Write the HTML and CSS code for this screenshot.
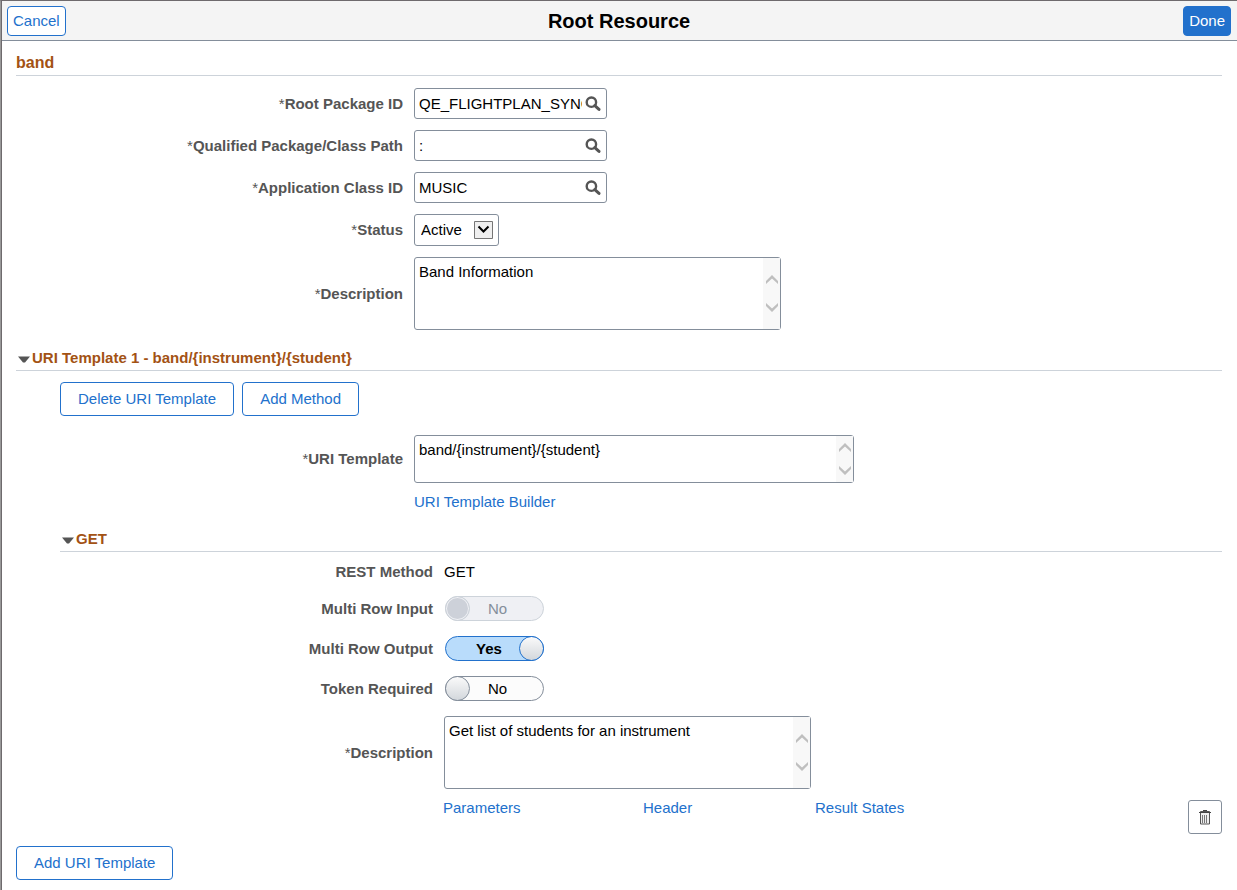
FILE: index.html
```html
<!DOCTYPE html>
<html lang="en">
<head>
<meta charset="utf-8">
<title>Root Resource</title>
<link rel="stylesheet" href="styles.css">
</head>
<body>
<svg class="sprite" aria-hidden="true">
  <symbol id="search" viewBox="0 0 16 16"><circle cx="6.4" cy="6.2" r="4.7" fill="none" stroke="#555" stroke-width="2.4"/><path d="M9.8 9.6 14 13.4" stroke="#555" stroke-width="3" stroke-linecap="round"/></symbol>
  <symbol id="up" viewBox="0 0 12 9"><path d="M0 6 6 0l6 6v3L6 3.6 0 9z" fill="#bfbfbf"/></symbol>
  <symbol id="down" viewBox="0 0 12 9"><path d="M0 3 6 9l6-6V0L6 5.4 0 0z" fill="#bfbfbf"/></symbol>
</svg>
<form class="dialog">
  <header class="topbar">
    <button type="button" class="btn small">Cancel</button>
    <h1>Root Resource</h1>
    <button type="button" class="btn small primary">Done</button>
  </header>
  <main class="content">
    <section>
      <h2 class="heading band">band</h2>
      <div class="fields first">
        <label for="pkg"><span>*</span>Root Package ID</label>
        <div class="lookup"><input id="pkg" type="text" value="QE_FLIGHTPLAN_SYNC"><button type="button" aria-label="Look up Root Package ID"><svg><use href="#search"/></svg></button></div>
        <label for="path"><span>*</span>Qualified Package/Class Path</label>
        <div class="lookup"><input id="path" type="text" value=":"><button type="button" aria-label="Look up Class Path"><svg><use href="#search"/></svg></button></div>
        <label for="cls"><span>*</span>Application Class ID</label>
        <div class="lookup"><input id="cls" type="text" value="MUSIC"><button type="button" aria-label="Look up Application Class ID"><svg><use href="#search"/></svg></button></div>
        <label for="status"><span>*</span>Status</label>
        <div class="choice"><select id="status"><option>Active</option></select><svg viewBox="0 0 19 18"><path d="M.5.5h18v17H.5z" fill="#efefef" stroke="#757575"/><path d="M4.5 5.5l5 5 5-5" fill="none" stroke="#000" stroke-width="2"/></svg></div>
        <label for="desc"><span>*</span>Description</label>
        <div class="area"><textarea id="desc">Band Information</textarea><div class="scroll"><svg><use href="#up"/></svg><svg><use href="#down"/></svg></div></div>
      </div>
    </section>
    <section>
      <h2 class="heading"><svg class="caret" viewBox="0 0 12 7"><path d="M0 .5h12L7 6.500H5z" fill="#555"/></svg>URI Template 1 - band/{instrument}/{student}</h2>
      <div class="actions">
        <button type="button" class="btn">Delete URI Template</button>
        <button type="button" class="btn">Add Method</button>
      </div>
      <div class="fields uri">
        <label for="uri"><span>*</span>URI Template</label>
        <div class="area wide"><textarea id="uri">band/{instrument}/{student}</textarea><div class="scroll"><svg><use href="#up"/></svg><svg><use href="#down"/></svg></div></div>
        <a class="builder" href="#">URI Template Builder</a>
      </div>
      <section class="method">
        <h3 class="heading"><svg class="caret" viewBox="0 0 12 7"><path d="M0 .5h12L7 6.500H5z" fill="#555"/></svg>GET</h3>
        <div class="fields nested">
          <span class="name">REST Method</span><span class="value">GET</span>
          <label for="mri">Multi Row Input</label>
          <label class="switch disabled"><input id="mri" type="checkbox" disabled><span>No</span></label>
          <label for="mro">Multi Row Output</label>
          <label class="switch on"><input id="mro" type="checkbox" checked><span>Yes</span></label>
          <label for="tok">Token Required</label>
          <label class="switch"><input id="tok" type="checkbox"><span>No</span></label>
          <label for="mdesc"><span>*</span>Description</label>
          <div class="area"><textarea id="mdesc">Get list of students for an instrument</textarea><div class="scroll"><svg><use href="#up"/></svg><svg><use href="#down"/></svg></div></div>
        </div>
        <div class="links">
          <a href="#">Parameters</a><a href="#">Header</a><a href="#">Result States</a>
          <button type="button" class="trash" aria-label="Delete method"><svg viewBox="0 0 12 16"><path d="M4 1h4v1H4z" fill="#444"/><path d="M1.500 3.500V2.500h9v1" fill="#ddd" stroke="#555"/><path d="M0 3.500h12" stroke="#444"/><path d="M1.500 4v11h9V4" fill="#eee" stroke="#555"/><path d="M3.500 6v8M5.500 6v8M7.500 6v8" stroke="#777"/></svg></button>
        </div>
      </section>
    </section>
    <button type="button" class="btn">Add URI Template</button>
  </main>
</form>
</body>
</html>
```
FILE: styles.css
```css
* { box-sizing: border-box; }
body {
  margin: 0;
  background: #fff;
  color: #000;
  font: 15px/20px "Liberation Sans", Arial, sans-serif;
}
button, input, select, textarea { font: inherit; color: inherit; }
.sprite { display: none; }
.dialog {
  min-height: 100vh;
  border-left: 1px solid #999;
  border-top: 1px solid #6e6a6d;
  box-shadow: inset 1px 0 #6e6a6d;
  padding-left: 1px;
}
.topbar {
  display: grid;
  grid-template-columns: 1fr auto 1fr;
  align-items: center;
  height: 40px;
  padding: 0 6px 0 5px;
  background: #f4f4f4;
  border-bottom: 1px solid #848e9b;
}
.topbar h1 { margin: 0; font-size: 20px; line-height: 24px; }
.btn {
  height: 34px;
  padding: 0 17px;
  border: 1px solid #2271cc;
  border-radius: 4px;
  background: #fff;
  color: #2271cc;
}
.btn.small { height: 30px; padding: 0 5px; justify-self: start; }
.btn.primary { background: #2271cc; color: #fff; justify-self: end; }
.content { padding: 12px 15px 10px 14px; }
.heading {
  display: flex;
  align-items: center;
  margin: 0;
  padding-bottom: 2px;
  border-bottom: 1px solid #cdd3da;
  color: #a35214;
  font-size: 15px;
  line-height: 20px;
}
.heading.band { font-size: 16px; }
.caret { width: 12px; height: 7px; margin: 3px 2px 0; }
.fields {
  display: grid;
  grid-template-columns: 387px auto;
  justify-content: start;
  justify-items: start;
  align-items: center;
  gap: 11px;
}
.fields > label:not(.switch), .name { justify-self: end; color: #555; font-weight: bold; }
.fields label:not(.switch) span { font-weight: normal; }
.first { padding: 12px 0 18px; }
.lookup {
  display: flex;
  align-items: center;
  width: 193px;
  height: 31px;
  padding: 0 5px 0 4px;
  border: 1px solid #848e9b;
  border-radius: 3px;
}
.lookup input { flex: 1; min-width: 0; padding: 0; border: 0; outline: 0; background: none; }
.lookup button { width: 19px; height: 16px; padding: 0 0 0 3px; border: 0; background: none; }
.lookup svg { display: block; width: 16px; height: 16px; }
.choice { position: relative; }
.choice select {
  display: block;
  width: 85px;
  height: 32px;
  padding: 0 6px;
  border: 1px solid #848e9b;
  border-radius: 3px;
  background: #fff;
  appearance: none;
}
.choice svg { position: absolute; top: 7px; right: 6px; width: 19px; height: 18px; pointer-events: none; }
.area {
  display: flex;
  width: 367px;
  height: 73px;
  border: 1px solid #848e9b;
  border-radius: 3px;
}
.area.wide { width: 440px; height: 48px; }
.area textarea { flex: 1; min-width: 0; padding: 4px; border: 0; outline: 0; background: none; resize: none; overflow: hidden; }
.scroll {
  display: flex;
  flex-direction: column;
  align-items: center;
  justify-content: center;
  gap: 19px;
  width: 17px;
  background: #f8f8f8;
}
.wide .scroll { gap: 14px; }
.scroll svg { width: 12px; height: 9px; }
.actions { display: flex; gap: 8px; padding: 11px 0 19px 44px; }
a { color: #2271cc; text-decoration: none; }
.uri { row-gap: 9px; }
.builder { grid-column: 2; }
.method { padding: 17px 0 12px 44px; }
.nested { grid-template-columns: 373px auto; row-gap: 15px; padding-top: 10px; }
.name, .value { margin-bottom: -1px; }
.switch {
  display: flex;
  align-items: center;
  width: 99px;
  height: 25px;
  margin-left: 1px;
  border: 1px solid #848e9b;
  border-radius: 13px;
  background: #fcfcfc;
}
.switch input {
  flex: none;
  width: 25px;
  height: 25px;
  margin: -1px;
  border: 1px solid #848e9b;
  border-radius: 50%;
  background: linear-gradient(#fafafa, #d3d7dc);
  appearance: none;
}
.switch span { padding-left: 19px; }
.switch.on { flex-direction: row-reverse; justify-content: space-between; border-color: #2271cc; background: #b9dcfb; font-weight: bold; }
.switch.on input { border-color: #2271cc; }
.switch.on span { padding-left: 30px; }
.switch.disabled { border-color: #cdd3da; background: #eff0f4; color: #848e9b; }
.switch.disabled input { border-color: #cdd3da; background: #cdd1d9; box-shadow: inset 0 0 0 1px #eff0f4; }
.links {
  display: grid;
  grid-template-columns: 200px 172px 1fr auto;
  align-items: start;
  padding: 9px 0 0 383px;
}
.trash {
  display: grid;
  place-items: center;
  width: 34px;
  height: 34px;
  margin-top: 2px;
  padding: 0;
  border: 1px solid #848e9b;
  border-radius: 3px;
  background: #fff;
}
.trash svg { width: 12px; height: 16px; }
```
